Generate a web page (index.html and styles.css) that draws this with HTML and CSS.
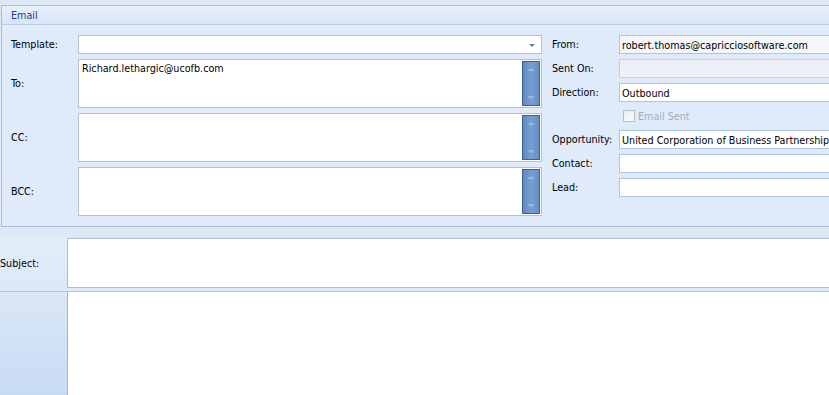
FILE: index.html
```html
<!DOCTYPE html>
<html lang="en">
<head>
  <meta charset="UTF-8" />
  <title>Email</title>
  <link rel="stylesheet" href="styles.css">
</head>
<body>
  <section class="group">
    <div class="group-head">Email</div>
    <div class="group-body">
      <div class="col-left">
        <div class="row">
          <label class="lbl">Template:</label>
          <div class="field combo"><span class="drop"></span></div>
        </div>
        <div class="row tall">
          <label class="lbl">To:</label>
          <div class="field memo">
            <span class="memo-text">Richard.lethargic@ucofb.com</span>
            <div class="scroll"><span class="up"></span><span class="down"></span></div>
          </div>
        </div>
        <div class="row tall">
          <label class="lbl">CC:</label>
          <div class="field memo">
            <span class="memo-text"></span>
            <div class="scroll"><span class="up"></span><span class="down"></span></div>
          </div>
        </div>
        <div class="row tall">
          <label class="lbl">BCC:</label>
          <div class="field memo">
            <span class="memo-text"></span>
            <div class="scroll"><span class="up"></span><span class="down"></span></div>
          </div>
        </div>
      </div>
      <div class="col-right">
        <div class="row">
          <label class="lbl">From:</label>
          <div class="field readonly">robert.thomas@capricciosoftware.com</div>
        </div>
        <div class="row">
          <label class="lbl">Sent On:</label>
          <div class="field disabled"></div>
        </div>
        <div class="row">
          <label class="lbl">Direction:</label>
          <div class="field">Outbound</div>
        </div>
        <div class="row check-row">
          <span class="check"></span>
          <span class="check-text">Email Sent</span>
        </div>
        <div class="row">
          <label class="lbl">Opportunity:</label>
          <div class="field">United Corporation of Business Partnership</div>
        </div>
        <div class="row">
          <label class="lbl">Contact:</label>
          <div class="field"></div>
        </div>
        <div class="row">
          <label class="lbl">Lead:</label>
          <div class="field"></div>
        </div>
      </div>
    </div>
  </section>

  <section class="subject">
    <label class="side">Subject:</label>
    <div class="subject-box"></div>
  </section>

  <section class="message">
    <div class="side-panel"></div>
    <div class="message-box"></div>
  </section>
</body>
</html>
```

FILE: styles.css
```css
* {
  box-sizing: border-box;
  font-family: "DejaVu Sans Condensed", "DejaVu Sans", sans-serif;
}
body {
  margin: 0;
  background: #dfe9f6;
  color: #000;
  font-size: 10.7px;
  overflow: hidden;
  width: 829px;
  height: 395px;
}
.group {
  margin: 5px 0 0 1px;
  width: 840px;
  height: 222px;
  border: 1px solid #a8bedb;
  background: #dfeafa;
}
.group-head {
  height: 19px;
  padding: 3px 0 0 9px;
  color: #15428b;
  background: linear-gradient(#e8f0fb, #dae6f6);
  border-bottom: 1px solid #b9cce6;
}
.group-body {
  display: flex;
  padding: 10px 0 0 9px;
}
.col-left {
  display: flex;
  flex-direction: column;
  gap: 5px;
  width: 531px;
  margin-right: 10px;
}
.col-right {
  display: flex;
  flex-direction: column;
  gap: 5px;
  flex: 1;
}
.row {
  display: flex;
  align-items: center;
  height: 19px;
}
.row.tall {
  height: 49px;
}
.lbl {
  width: 67px;
  flex: none;
}
.field {
  flex: 1;
  height: 100%;
  background: #fff;
  border: 1px solid #aec3de;
  padding: 3px 0 0 2px;
  white-space: nowrap;
  overflow: hidden;
  position: relative;
}
.field.readonly {
  background: #f4f6fa;
}
.field.disabled {
  background: #edf1f7;
  border-color: #c3d1e3;
}
.combo .drop {
  position: absolute;
  right: 6px;
  top: 8px;
  border-left: 3px solid transparent;
  border-right: 3px solid transparent;
  border-top: 3px solid #6b7f99;
}
.memo {
  display: flex;
  padding: 0;
}
.memo-text {
  flex: 1;
  padding: 2px 0 0 3px;
}
.scroll {
  position: relative;
  width: 18px;
  margin: 1px 1px 1px 0;
  background: linear-gradient(90deg, #5f89c2, #779ed2 50%, #6690c8);
  border: 1px solid #3f5f8c;
}
.scroll .up,
.scroll .down {
  position: absolute;
  left: 4px;
  border-left: 4px solid transparent;
  border-right: 4px solid transparent;
}
.scroll .up {
  top: 6px;
  border-bottom: 3px solid #9ab7de;
}
.scroll .down {
  bottom: 6px;
  border-top: 3px solid #9ab7de;
}
.check-row {
  padding-left: 71px;
  gap: 3px;
  height: 18px;
}
.check {
  width: 12px;
  height: 12px;
  border: 1px solid #b4c0cd;
  background: linear-gradient(135deg, #e9edf2, #fafbfc);
}
.check-text {
  color: #a3adb9;
}
.subject {
  display: flex;
  margin-top: 11px;
  height: 53px;
}
.subject .side {
  width: 67px;
  display: flex;
  align-items: center;
  padding-bottom: 3px;
  background: linear-gradient(#e3edfa, #dce8f7);
}
.subject-box {
  flex: 1;
  background: #fff;
  border: 1px solid #aebed3;
  border-right: none;
  height: 50px;
}
.message {
  display: flex;
  height: 110px;
  border-top: 1px solid #b7c7db;
}
.side-panel {
  width: 67px;
  background: linear-gradient(#dbe7f7, #c6dbf4);
}
.message-box {
  flex: 1;
  background: #fff;
  border-left: 1px solid #a4b6cc;
}
```
